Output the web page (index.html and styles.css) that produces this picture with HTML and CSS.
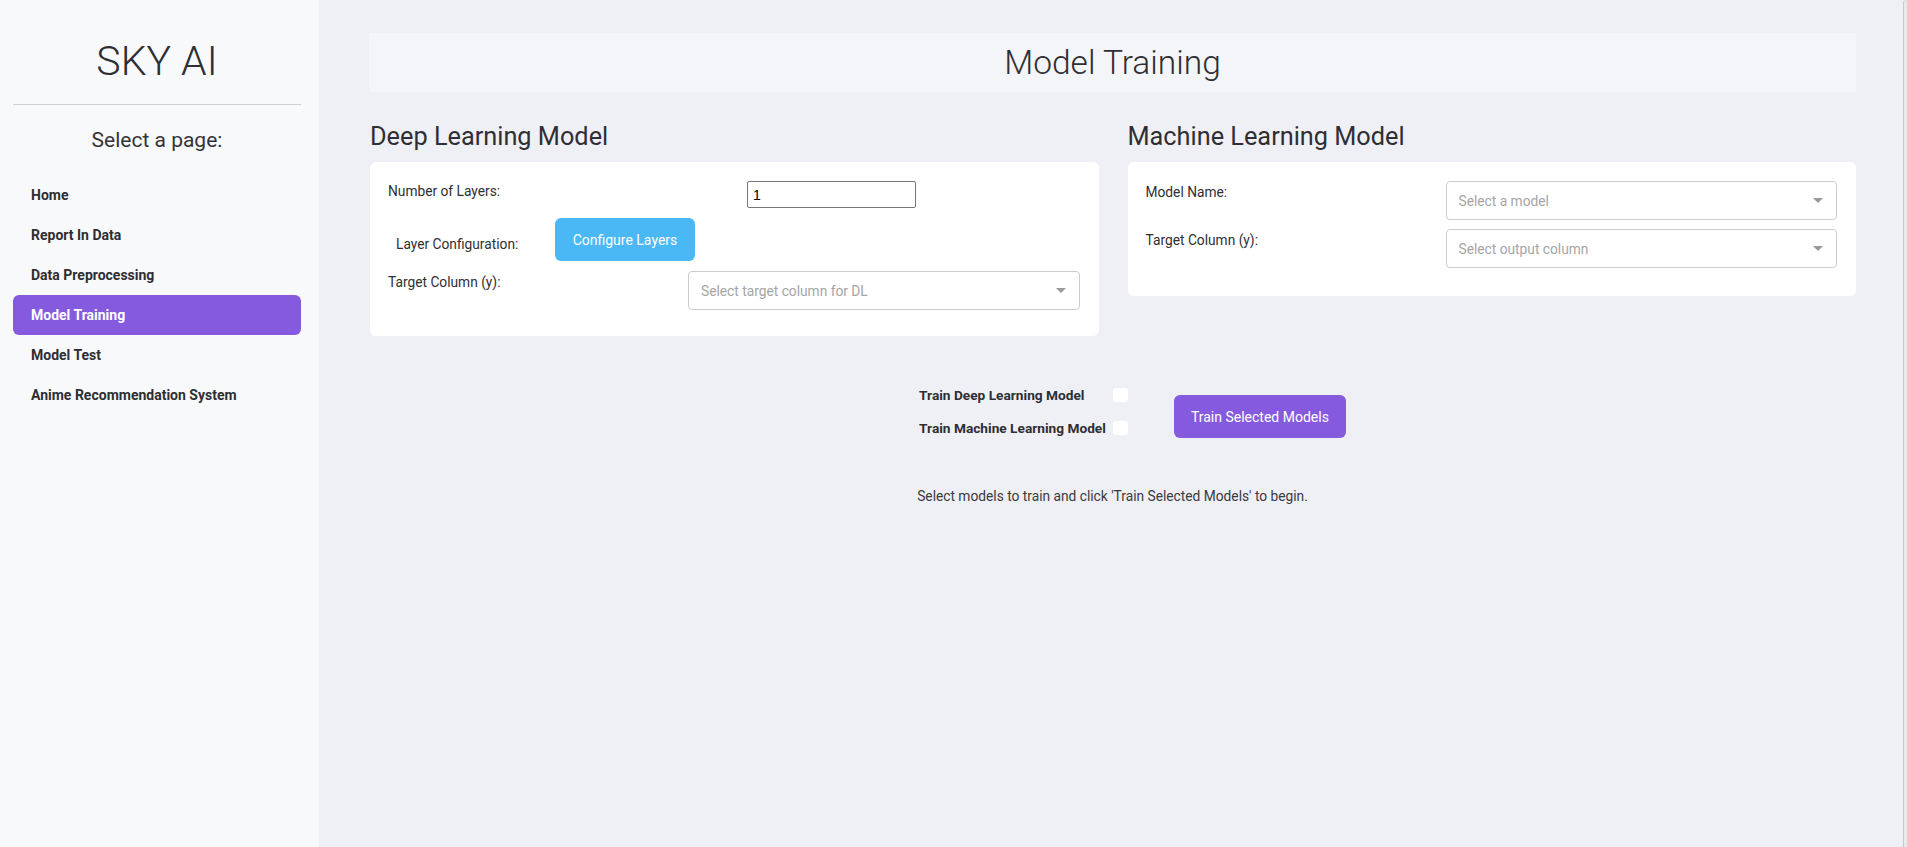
FILE: index.html
```html
<!DOCTYPE html>
<html lang="en">
<head>
<meta charset="utf-8">
<title>SKY AI - Model Training</title>
<link rel="stylesheet" href="styles.css">
</head>
<body>
<div class="app">
  <aside class="sidebar">
    <h1 class="brand">SKY AI</h1>
    <hr class="divider">
    <h2 class="nav-title">Select a page:</h2>
    <nav class="nav">
      <a class="nav-link">Home</a>
      <a class="nav-link">Report In Data</a>
      <a class="nav-link">Data Preprocessing</a>
      <a class="nav-link active">Model Training</a>
      <a class="nav-link">Model Test</a>
      <a class="nav-link">Anime Recommendation System</a>
    </nav>
  </aside>
  <main class="main">
    <div class="page-header">Model Training</div>
    <div class="model-grid">
      <section class="model-col">
        <h3 class="section-title">Deep Learning Model</h3>
        <div class="card card-dl">
          <div class="row row-layers">
            <label class="lbl lbl-layers">Number of Layers:</label>
            <input class="num-input" type="text" value="1">
          </div>
          <div class="row row-config">
            <label class="lbl lbl-config">Layer Configuration:</label>
            <button class="btn btn-blue">Configure Layers</button>
          </div>
          <div class="row row-select">
            <label class="lbl lbl-col">Target Column (y):</label>
            <div class="select"><span class="placeholder">Select target column for DL</span><span class="caret"></span></div>
          </div>
        </div>
      </section>
      <section class="model-col">
        <h3 class="section-title">Machine Learning Model</h3>
        <div class="card card-ml">
          <div class="row row-select">
            <label class="lbl lbl-col">Model Name:</label>
            <div class="select"><span class="placeholder">Select a model</span><span class="caret"></span></div>
          </div>
          <div class="row row-select">
            <label class="lbl lbl-col">Target Column (y):</label>
            <div class="select"><span class="placeholder">Select output column</span><span class="caret"></span></div>
          </div>
        </div>
      </section>
    </div>
    <div class="train-row">
      <div class="checklist">
        <span class="chk-label">Train Deep Learning Model</span><span class="chk"></span>
        <span class="chk-label">Train Machine Learning Model</span><span class="chk"></span>
      </div>
      <button class="btn btn-purple">Train Selected Models</button>
    </div>
    <p class="status">Select models to train and click 'Train Selected Models' to begin.</p>
  </main>
  <div class="scroll-edge"></div>
</div>
</body>
</html>
```
FILE: styles.css
```css
* { box-sizing: border-box; }
html, body { margin: 0; padding: 0; }
body {
  font-family: Roboto, "Liberation Sans", sans-serif;
  font-size: 13.75px;
  line-height: 20px;
  color: #343a40;
  background: #eff0f5;
}
.app {
  display: flex;
  width: 1907px;
  height: 847px;
  overflow: hidden;
}
.sidebar {
  width: 319px;
  flex: 0 0 319px;
  background: #f8f9fb;
  padding: 37px 18px 0 13px;
}
.brand {
  margin: 0;
  font-size: 41px;
  line-height: 48px;
  font-weight: 300;
  text-align: center;
  color: #2f2f33;
}
.divider {
  margin: 19px 0 0;
  border: 0;
  border-top: 1px solid #cfd0d4;
}
.nav-title {
  margin: 22px 0 0;
  font-size: 21px;
  line-height: 26px;
  font-weight: 400;
  text-align: center;
  color: #343438;
}
.nav {
  margin-top: 22px;
  display: flex;
  flex-direction: column;
}
.nav-link {
  height: 40px;
  display: flex;
  align-items: center;
  padding-left: 18px;
  border-radius: 6px;
  font-weight: 700;
  font-size: 14px;
  color: #2e2e33;
}
.nav-link.active {
  background: #855adf;
  color: #ffffff;
}
.main {
  flex: 1;
  padding: 33px 47px 0 50px;
}
.page-header {
  height: 59px;
  background: #f3f5f9;
  display: flex;
  align-items: center;
  justify-content: center;
  font-size: 33.5px;
  font-weight: 300;
  color: #2f2f33;
}
.model-grid {
  display: grid;
  grid-template-columns: 1fr 1fr;
  column-gap: 29px;
  align-items: start;
  padding-left: 1px;
  margin-top: 30px;
}
.section-title {
  margin: 0 0 10px;
  font-size: 25.3px;
  line-height: 30px;
  font-weight: 400;
  color: #2f2f33;
}
.card {
  background: #ffffff;
  border-radius: 6px;
  padding: 19px 19px 27px 18px;
  display: flex;
  flex-direction: column;
}
.card-dl { gap: 10px; padding-bottom: 26px; }
.card-ml { gap: 9px; padding-bottom: 28px; }
.row {
  display: flex;
  align-items: flex-start;
}
.lbl { color: #2f2f33; }
.lbl-layers { width: 359px; flex: 0 0 359px; }
.lbl-config { width: 167px; flex: 0 0 167px; padding-left: 8px; margin-top: 16px; }
.lbl-col { width: 300px; flex: 0 0 300px; margin-top: 1px; }
.num-input {
  width: 169px;
  height: 27px;
  border: 1px solid #767676;
  border-radius: 2px;
  padding: 0 5px;
  font-family: "Liberation Sans", Arial, sans-serif;
  font-size: 14px;
  color: #000;
  background: #fff;
}
.btn {
  border: 0;
  border-radius: 6px;
  height: 43px;
  padding: 0 16px;
  font-family: Roboto, "Liberation Sans", sans-serif;
  font-size: 14px;
  color: #ffffff;
}
.btn-blue { background: #4bb8f6; width: 140px; padding: 0; }
.btn-purple { background: #855adf; width: 172px; padding: 0; margin-left: 46px; margin-top: 17px; }
.select {
  flex: 1;
  height: 39px;
  border: 1px solid #cccccc;
  border-radius: 4px;
  background: #fff;
  display: flex;
  align-items: center;
  justify-content: space-between;
  padding: 0 13px 0 12px;
}
.placeholder { color: #a5a5a8; }
.caret {
  width: 0;
  height: 0;
  border-left: 5px solid transparent;
  border-right: 5px solid transparent;
  border-top: 5px solid #9a9a9a;
}
.train-row {
  margin-top: 42px;
  display: flex;
  justify-content: center;
  align-items: flex-start;
  padding-left: 40px;
}
.checklist {
  display: grid;
  grid-template-columns: auto 15px;
  grid-auto-rows: 33px;
  column-gap: 7px;
  align-items: center;
}
.chk-label {
  font-weight: 700;
  font-size: 13.7px;
  color: #2e2e33;
}
.chk {
  width: 15px;
  height: 14px;
  background: #ffffff;
  border-radius: 3px;
}
.status {
  margin: 42px 0 0;
  text-align: center;
  color: #3a3a40;
}
.scroll-edge {
  width: 4px;
  flex: 0 0 4px;
  background: #e9e9ec;
  border-left: 1px solid #c9c9cc;
  border-top-left-radius: 3px;
}
```
